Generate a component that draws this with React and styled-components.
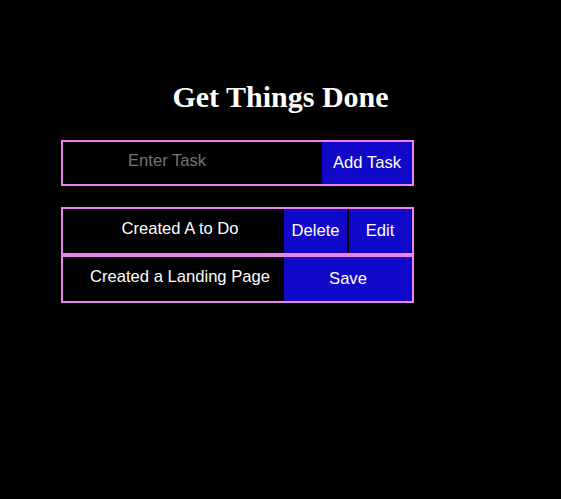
import React from 'react'
import styled, { createGlobalStyle } from 'styled-components'

const GlobalStyle = createGlobalStyle`
  body {
    margin: 0;
    background: #000000;
    font-family: "Liberation Sans", Arial, sans-serif;
  }
`

const tasks = [
  { id: 1, text: 'Created A to Do', editing: false },
  { id: 2, text: 'Created a Landing Page', editing: true },
]

export default function App() {
  return (
    <>
      <GlobalStyle />
      <PageStyled>
        <TitleStyled>Get Things Done</TitleStyled>
        <TodoWrapper>
          <FormStyled onSubmit={(e) => e.preventDefault()}>
            <TaskInput type="text" placeholder="Enter Task" />
            <AddButton type="submit">Add Task</AddButton>
          </FormStyled>
          <ListStyled>
            {tasks.map((task) => (
              <TaskItem key={task.id}>
                <TaskText>{task.text}</TaskText>
                {task.editing ? (
                  <ActionButton $wide>Save</ActionButton>
                ) : (
                  <>
                    <ActionButton $width={63}>Delete</ActionButton>
                    <ActionButton $width={62}>Edit</ActionButton>
                  </>
                )}
              </TaskItem>
            ))}
          </ListStyled>
        </TodoWrapper>
      </PageStyled>
    </>
  )
}

const PageStyled = styled.div`
  min-height: 499px;
  padding-top: 79px;
  box-sizing: border-box;
`
const TitleStyled = styled.h1`
  margin: 0;
  font-family: "Liberation Serif", "Times New Roman", serif;
  font-size: 30px;
  line-height: 35px;
  font-weight: 700;
  color: #ffffff;
  text-align: center;
`
const TodoWrapper = styled.div`
  width: 353px;
  margin: 26px 0 0 61px;
`
const FormStyled = styled.form`
  display: flex;
  height: 46px;
  border: 2px solid #ee82ee;
  box-sizing: border-box;
`
const TaskInput = styled.input`
  flex: 1 1;
  min-width: 0;
  background: #000000;
  border: none;
  outline: none;
  color: #ffffff;
  font-family: "Liberation Sans", Arial, sans-serif;
  font-size: 16.6px;
  padding: 0 0 4px 65px;
  &::placeholder {
    color: #757575;
  }
`
const AddButton = styled.button`
  width: 90px;
  background: #1208c9;
  color: #ffffff;
  border: none;
  font-family: "Liberation Sans", Arial, sans-serif;
  font-size: 16.6px;
  padding: 0;
`
const ListStyled = styled.ul`
  list-style: none;
  margin: 21px 0 0 0;
  padding: 0;
`
const TaskItem = styled.li`
  display: flex;
  height: 48px;
  border: 2px solid #ee82ee;
  box-sizing: border-box;
`
const TaskText = styled.p`
  width: 221px;
  flex: none;
  margin: 0;
  padding: 0 0 5px 13px;
  box-sizing: border-box;
  display: flex;
  align-items: center;
  justify-content: center;
  color: #ffffff;
  font-size: 16.6px;
`
const ActionButton = styled.button`
  flex: ${(p) => (p.$wide ? '1 1' : 'none')};
  width: ${(p) => (p.$wide ? 'auto' : p.$width + 'px')};
  margin-right: ${(p) => (p.$wide ? '0' : '2px')};
  background: #1208c9;
  color: #ffffff;
  border: none;
  padding: 0;
  font-family: "Liberation Sans", Arial, sans-serif;
  font-size: 16.6px;
  &:last-child {
    margin-right: ${(p) => (p.$wide ? '0' : '1px')};
  }
`
